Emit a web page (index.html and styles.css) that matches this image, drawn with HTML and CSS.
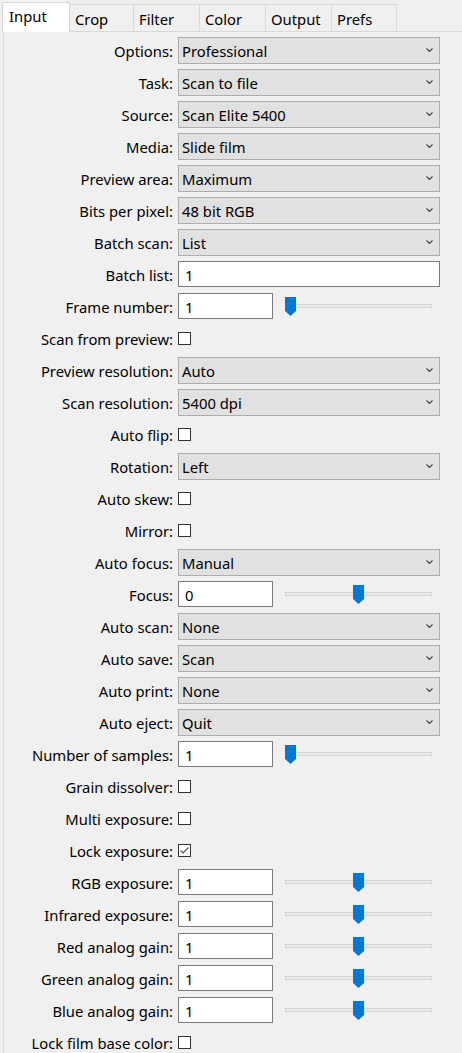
FILE: index.html
```html
<!DOCTYPE html>
<html>
<head>
<meta charset="utf-8">
<link rel="stylesheet" href="styles.css">
</head>
<body>
<div class="tabs">
  <div class="tab tab-active">Input</div>
  <div class="tab tab-crop">Crop</div>
  <div class="tab">Filter</div>
  <div class="tab">Color</div>
  <div class="tab">Output</div>
  <div class="tab tab-prefs">Prefs</div>
</div>
<div class="panel">
  <div class="form">
    <label class="lbl">Options:</label>
    <div class="combo"><span>Professional</span><svg class="chev" width="7" height="4" viewBox="0 0 7 4"><polyline points="0.5,0.5 3.5,3.5 6.5,0.5" /></svg></div>

    <label class="lbl">Task:</label>
    <div class="combo"><span>Scan to file</span><svg class="chev" width="7" height="4" viewBox="0 0 7 4"><polyline points="0.5,0.5 3.5,3.5 6.5,0.5" /></svg></div>

    <label class="lbl">Source:</label>
    <div class="combo"><span>Scan Elite 5400</span><svg class="chev" width="7" height="4" viewBox="0 0 7 4"><polyline points="0.5,0.5 3.5,3.5 6.5,0.5" /></svg></div>

    <label class="lbl">Media:</label>
    <div class="combo"><span>Slide film</span><svg class="chev" width="7" height="4" viewBox="0 0 7 4"><polyline points="0.5,0.5 3.5,3.5 6.5,0.5" /></svg></div>

    <label class="lbl">Preview area:</label>
    <div class="combo"><span>Maximum</span><svg class="chev" width="7" height="4" viewBox="0 0 7 4"><polyline points="0.5,0.5 3.5,3.5 6.5,0.5" /></svg></div>

    <label class="lbl">Bits per pixel:</label>
    <div class="combo"><span>48 bit RGB</span><svg class="chev" width="7" height="4" viewBox="0 0 7 4"><polyline points="0.5,0.5 3.5,3.5 6.5,0.5" /></svg></div>

    <label class="lbl">Batch scan:</label>
    <div class="combo"><span>List</span><svg class="chev" width="7" height="4" viewBox="0 0 7 4"><polyline points="0.5,0.5 3.5,3.5 6.5,0.5" /></svg></div>

    <label class="lbl">Batch list:</label>
    <div class="text wide">1</div>

    <label class="lbl">Frame number:</label>
    <div class="ctl"><div class="text short">1</div><div class="slider"><div class="track"></div><svg class="thumb" style="left:0px" width="11" height="19" viewBox="0 0 11 19"><path d="M0 0H11V14L5.5 19L0 14Z"/></svg></div></div>

    <label class="lbl">Scan from preview:</label>
    <div class="ctl"><span class="check"></span></div>

    <label class="lbl">Preview resolution:</label>
    <div class="combo"><span>Auto</span><svg class="chev" width="7" height="4" viewBox="0 0 7 4"><polyline points="0.5,0.5 3.5,3.5 6.5,0.5" /></svg></div>

    <label class="lbl">Scan resolution:</label>
    <div class="combo"><span>5400 dpi</span><svg class="chev" width="7" height="4" viewBox="0 0 7 4"><polyline points="0.5,0.5 3.5,3.5 6.5,0.5" /></svg></div>

    <label class="lbl">Auto flip:</label>
    <div class="ctl"><span class="check"></span></div>

    <label class="lbl">Rotation:</label>
    <div class="combo"><span>Left</span><svg class="chev" width="7" height="4" viewBox="0 0 7 4"><polyline points="0.5,0.5 3.5,3.5 6.5,0.5" /></svg></div>

    <label class="lbl">Auto skew:</label>
    <div class="ctl"><span class="check"></span></div>

    <label class="lbl">Mirror:</label>
    <div class="ctl"><span class="check"></span></div>

    <label class="lbl">Auto focus:</label>
    <div class="combo"><span>Manual</span><svg class="chev" width="7" height="4" viewBox="0 0 7 4"><polyline points="0.5,0.5 3.5,3.5 6.5,0.5" /></svg></div>

    <label class="lbl">Focus:</label>
    <div class="ctl"><div class="text short">0</div><div class="slider"><div class="track"></div><svg class="thumb" style="left:68px" width="11" height="19" viewBox="0 0 11 19"><path d="M0 0H11V14L5.5 19L0 14Z"/></svg></div></div>

    <label class="lbl">Auto scan:</label>
    <div class="combo"><span>None</span><svg class="chev" width="7" height="4" viewBox="0 0 7 4"><polyline points="0.5,0.5 3.5,3.5 6.5,0.5" /></svg></div>

    <label class="lbl">Auto save:</label>
    <div class="combo"><span>Scan</span><svg class="chev" width="7" height="4" viewBox="0 0 7 4"><polyline points="0.5,0.5 3.5,3.5 6.5,0.5" /></svg></div>

    <label class="lbl">Auto print:</label>
    <div class="combo"><span>None</span><svg class="chev" width="7" height="4" viewBox="0 0 7 4"><polyline points="0.5,0.5 3.5,3.5 6.5,0.5" /></svg></div>

    <label class="lbl">Auto eject:</label>
    <div class="combo"><span>Quit</span><svg class="chev" width="7" height="4" viewBox="0 0 7 4"><polyline points="0.5,0.5 3.5,3.5 6.5,0.5" /></svg></div>

    <label class="lbl">Number of samples:</label>
    <div class="ctl"><div class="text short">1</div><div class="slider"><div class="track"></div><svg class="thumb" style="left:0px" width="11" height="19" viewBox="0 0 11 19"><path d="M0 0H11V14L5.5 19L0 14Z"/></svg></div></div>

    <label class="lbl">Grain dissolver:</label>
    <div class="ctl"><span class="check"></span></div>

    <label class="lbl">Multi exposure:</label>
    <div class="ctl"><span class="check"></span></div>

    <label class="lbl">Lock exposure:</label>
    <div class="ctl"><span class="check"><svg width="11" height="11" viewBox="0 0 11 11"><polyline points="1.5,5.5 4,8 9.5,2.5"/></svg></span></div>

    <label class="lbl">RGB exposure:</label>
    <div class="ctl"><div class="text short">1</div><div class="slider"><div class="track"></div><svg class="thumb" style="left:68px" width="11" height="19" viewBox="0 0 11 19"><path d="M0 0H11V14L5.5 19L0 14Z"/></svg></div></div>

    <label class="lbl">Infrared exposure:</label>
    <div class="ctl"><div class="text short">1</div><div class="slider"><div class="track"></div><svg class="thumb" style="left:68px" width="11" height="19" viewBox="0 0 11 19"><path d="M0 0H11V14L5.5 19L0 14Z"/></svg></div></div>

    <label class="lbl">Red analog gain:</label>
    <div class="ctl"><div class="text short">1</div><div class="slider"><div class="track"></div><svg class="thumb" style="left:68px" width="11" height="19" viewBox="0 0 11 19"><path d="M0 0H11V14L5.5 19L0 14Z"/></svg></div></div>

    <label class="lbl">Green analog gain:</label>
    <div class="ctl"><div class="text short">1</div><div class="slider"><div class="track"></div><svg class="thumb" style="left:68px" width="11" height="19" viewBox="0 0 11 19"><path d="M0 0H11V14L5.5 19L0 14Z"/></svg></div></div>

    <label class="lbl">Blue analog gain:</label>
    <div class="ctl"><div class="text short">1</div><div class="slider"><div class="track"></div><svg class="thumb" style="left:68px" width="11" height="19" viewBox="0 0 11 19"><path d="M0 0H11V14L5.5 19L0 14Z"/></svg></div></div>

    <label class="lbl">Lock film base color:</label>
    <div class="ctl"><span class="check"></span></div>
  </div>
</div>
</body>
</html>
```
FILE: styles.css
```css
html, body {
  margin: 0;
  padding: 0;
  background: #f0f0f0;
  height: 100%;
  overflow: hidden;
}
body {
  font-family: "Noto Sans", "Open Sans", sans-serif;
  font-size: 14.8px;
  color: #000;
}
.tabs {
  display: flex;
  height: 31px;
  padding-left: 4px;
  box-sizing: border-box;
  align-items: flex-end;
  position: relative;
  z-index: 1;
}
.tab {
  box-sizing: border-box;
  height: 27px;
  width: 66px;
  border: 1px solid #d9d9d9;
  border-left: none;
  border-bottom: none;
  padding-left: 5px;
  line-height: 28px;
  background: #f0f0f0;
}
.tab-crop { width: 64px; }
.tab-prefs { width: 65px; }
.tab-active {
  width: 68px;
  margin-left: -2px;
  height: 30px;
  margin-bottom: -1px;
  border-left: 1px solid #d9d9d9;
  background: #fff;
  padding-left: 6px;
  line-height: 27px;
}
.panel {
  margin-left: 3px;
  border-left: 1px solid #d9d9d9;
  border-top: 1px solid #d9d9d9;
  padding-top: 2px;
  height: calc(100% - 31px);
  box-sizing: border-box;
}
.form {
  display: grid;
  grid-template-columns: 169px 262px;
  column-gap: 5px;
  grid-auto-rows: 32px;
  align-items: center;
}
.lbl {
  text-align: right;
  white-space: nowrap;
  padding-top: 2px;
}
.combo {
  box-sizing: border-box;
  height: 27px;
  border: 1px solid #adadad;
  background: #e1e1e1;
  display: flex;
  align-items: center;
  justify-content: space-between;
  padding: 2px 6px 0 3px;
}
.chev {
  margin-top: -2px;
}
.chev polyline {
  fill: none;
  stroke: #404040;
  stroke-width: 1.1;
}
.text {
  box-sizing: border-box;
  height: 26px;
  border: 1px solid #7a7a7a;
  background: #fff;
  padding-left: 6px;
  line-height: 26px;
}
.wide { width: 262px; }
.short { width: 95px; }
.ctl {
  display: flex;
  align-items: center;
  gap: 12px;
}
.slider {
  position: relative;
  width: 147px;
  height: 19px;
}
.track {
  margin-top: 7px;
  height: 4px;
  box-sizing: border-box;
  border: 1px solid #d6d6d6;
  background: #e7eaea;
}
.thumb {
  position: absolute;
  top: 0;
}
.thumb path { fill: #0078d7; }
.check {
  box-sizing: border-box;
  width: 13px;
  height: 13px;
  border: 1px solid #333;
  background: #fff;
  display: flex;
  align-items: center;
  justify-content: center;
}
.check polyline {
  fill: none;
  stroke: #555;
  stroke-width: 1.2;
}
```
